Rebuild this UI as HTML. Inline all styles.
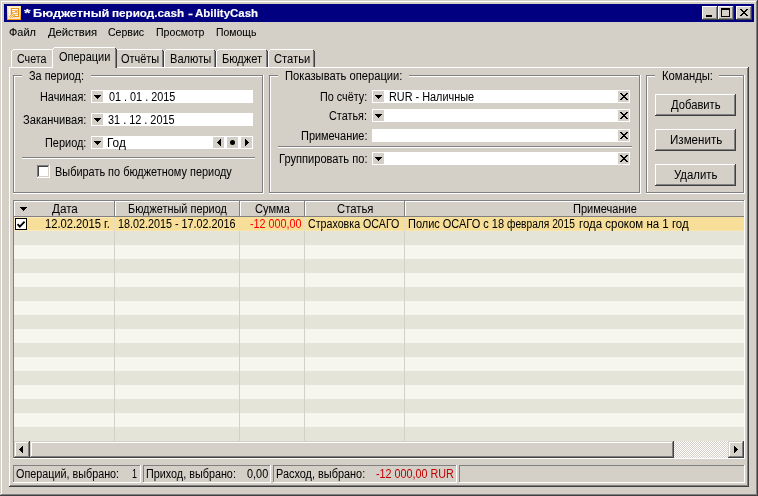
<!DOCTYPE html>
<html><head><meta charset="utf-8"><title>AbilityCash</title>
<style>
html,body{margin:0;padding:0;background:#d4d0c8;}
body{width:758px;height:496px;position:relative;overflow:hidden;font-family:"Liberation Sans",sans-serif;}
body>div,body>svg,#txt>span{position:absolute;display:block;}
#txt{left:0;top:0;width:758px;height:496px;will-change:transform;}
.t{white-space:nowrap;line-height:16px;height:16px;transform-origin:0 0;-webkit-text-stroke:0.03px currentColor;}
</style></head><body>
<div style="left:0px;top:0px;width:758px;height:496px;background:#d4d0c8;"></div>
<div style="left:1px;top:1px;width:755px;height:1px;background:#ffffff;"></div>
<div style="left:1px;top:1px;width:1px;height:493px;background:#ffffff;"></div>
<div style="left:0px;top:495px;width:758px;height:1px;background:#404040;"></div>
<div style="left:757px;top:0px;width:1px;height:496px;background:#404040;"></div>
<div style="left:1px;top:494px;width:756px;height:1px;background:#808080;"></div>
<div style="left:756px;top:1px;width:1px;height:494px;background:#808080;"></div>
<div style="left:4px;top:4px;width:750px;height:18px;background:#000080;"></div>
<svg style="left:7px;top:6px" width="14" height="14" viewBox="0 0 14 14">
<defs><linearGradient id="ig" x1="0" y1="0" x2="0" y2="1"><stop offset="0" stop-color="#ffefb0"/><stop offset="0.5" stop-color="#fbc96a"/><stop offset="1" stop-color="#f59a14"/></linearGradient></defs>
<rect x="0" y="0" width="14" height="14" fill="url(#ig)"/>
<rect x="1" y="1" width="12" height="12" fill="#fbe6c4"/>
<rect x="1" y="1" width="12" height="1" fill="#fdf2dc"/>
<rect x="2" y="2" width="1" height="9" fill="#ffffff" opacity="0.85"/>
<rect x="4" y="2" width="8" height="9" fill="#f0901a"/>
<rect x="5" y="3" width="6" height="7" fill="#f5b562"/>
<rect x="5" y="3" width="6" height="1" fill="#ffffff"/>
<rect x="5" y="5" width="6" height="1" fill="#fff6e8"/>
<rect x="8" y="5" width="2" height="1" fill="#f3a440"/>
<rect x="6" y="7" width="5" height="1" fill="#fff6e8"/>
<rect x="8" y="9" width="3" height="1" fill="#ffffff"/>
<rect x="3" y="8" width="4" height="4" fill="#fbe6c4"/>
<rect x="5" y="7" width="1" height="1" fill="#f0a030"/><rect x="4" y="8" width="1" height="1" fill="#f0a030"/><rect x="6" y="8" width="1" height="1" fill="#f0a030"/>
<rect x="3" y="9" width="1" height="1" fill="#f0a030"/><rect x="5" y="9" width="1" height="1" fill="#f0a030"/><rect x="7" y="9" width="1" height="1" fill="#f3b050"/>
<rect x="2" y="10" width="1" height="1" fill="#f3b050"/><rect x="4" y="10" width="1" height="1" fill="#f0a030"/><rect x="6" y="10" width="1" height="1" fill="#f0a030"/>
<rect x="3" y="11" width="1" height="1" fill="#f3b050"/><rect x="5" y="11" width="1" height="1" fill="#f3b050"/>
</svg>
<div style="left:702px;top:6px;width:16px;height:14px;background:#d4d0c8;"></div>
<div style="left:702px;top:6px;width:15px;height:1px;background:#ffffff;"></div>
<div style="left:702px;top:6px;width:1px;height:13px;background:#ffffff;"></div>
<div style="left:702px;top:19px;width:16px;height:1px;background:#404040;"></div>
<div style="left:717px;top:6px;width:1px;height:14px;background:#404040;"></div>
<div style="left:703px;top:18px;width:14px;height:1px;background:#808080;"></div>
<div style="left:716px;top:7px;width:1px;height:12px;background:#808080;"></div>
<div style="left:706px;top:15px;width:6px;height:2px;background:#000;"></div>
<div style="left:718px;top:6px;width:16px;height:14px;background:#d4d0c8;"></div>
<div style="left:718px;top:6px;width:15px;height:1px;background:#ffffff;"></div>
<div style="left:718px;top:6px;width:1px;height:13px;background:#ffffff;"></div>
<div style="left:718px;top:19px;width:16px;height:1px;background:#404040;"></div>
<div style="left:733px;top:6px;width:1px;height:14px;background:#404040;"></div>
<div style="left:719px;top:18px;width:14px;height:1px;background:#808080;"></div>
<div style="left:732px;top:7px;width:1px;height:12px;background:#808080;"></div>
<div style="left:721px;top:8px;width:9px;height:9px;background:#000;"></div>
<div style="left:722px;top:10px;width:7px;height:6px;background:#d4d0c8;"></div>
<div style="left:736px;top:6px;width:16px;height:14px;background:#d4d0c8;"></div>
<div style="left:736px;top:6px;width:15px;height:1px;background:#ffffff;"></div>
<div style="left:736px;top:6px;width:1px;height:13px;background:#ffffff;"></div>
<div style="left:736px;top:19px;width:16px;height:1px;background:#404040;"></div>
<div style="left:751px;top:6px;width:1px;height:14px;background:#404040;"></div>
<div style="left:737px;top:18px;width:14px;height:1px;background:#808080;"></div>
<div style="left:750px;top:7px;width:1px;height:12px;background:#808080;"></div>
<svg style="left:740px;top:9px" width="8" height="7" viewBox="0 0 8 7" shape-rendering="crispEdges"><rect x="0" y="0" width="2" height="1" fill="#000"/><rect x="6" y="0" width="2" height="1" fill="#000"/><rect x="1" y="1" width="2" height="1" fill="#000"/><rect x="5" y="1" width="2" height="1" fill="#000"/><rect x="2" y="2" width="2" height="1" fill="#000"/><rect x="4" y="2" width="2" height="1" fill="#000"/><rect x="3" y="3" width="2" height="1" fill="#000"/><rect x="3" y="3" width="2" height="1" fill="#000"/><rect x="4" y="4" width="2" height="1" fill="#000"/><rect x="2" y="4" width="2" height="1" fill="#000"/><rect x="5" y="5" width="2" height="1" fill="#000"/><rect x="1" y="5" width="2" height="1" fill="#000"/><rect x="6" y="6" width="2" height="1" fill="#000"/><rect x="0" y="6" width="2" height="1" fill="#000"/></svg>
<div style="left:9px;top:67px;width:739px;height:1px;background:#ffffff;"></div>
<div style="left:9px;top:67px;width:1px;height:419px;background:#ffffff;"></div>
<div style="left:9px;top:486px;width:740px;height:1px;background:#404040;"></div>
<div style="left:748px;top:67px;width:1px;height:420px;background:#404040;"></div>
<div style="left:10px;top:485px;width:738px;height:1px;background:#808080;"></div>
<div style="left:747px;top:68px;width:1px;height:418px;background:#808080;"></div>
<div style="left:11px;top:49px;width:43px;height:18px;background:#d4d0c8;"></div>
<div style="left:11px;top:51px;width:1px;height:16px;background:#ffffff;"></div>
<div style="left:12px;top:50px;width:1px;height:1px;background:#ffffff;"></div>
<div style="left:13px;top:49px;width:39px;height:1px;background:#ffffff;"></div>
<div style="left:52px;top:51px;width:1px;height:16px;background:#808080;"></div>
<div style="left:53px;top:51px;width:1px;height:16px;background:#404040;"></div>
<div style="left:52px;top:50px;width:1px;height:1px;background:#404040;"></div>
<div style="left:115px;top:49px;width:49px;height:18px;background:#d4d0c8;"></div>
<div style="left:117px;top:49px;width:45px;height:1px;background:#ffffff;"></div>
<div style="left:162px;top:51px;width:1px;height:16px;background:#808080;"></div>
<div style="left:163px;top:51px;width:1px;height:16px;background:#404040;"></div>
<div style="left:162px;top:50px;width:1px;height:1px;background:#404040;"></div>
<div style="left:164px;top:49px;width:52px;height:18px;background:#d4d0c8;"></div>
<div style="left:164px;top:51px;width:1px;height:16px;background:#ffffff;"></div>
<div style="left:165px;top:50px;width:1px;height:1px;background:#ffffff;"></div>
<div style="left:166px;top:49px;width:48px;height:1px;background:#ffffff;"></div>
<div style="left:214px;top:51px;width:1px;height:16px;background:#808080;"></div>
<div style="left:215px;top:51px;width:1px;height:16px;background:#404040;"></div>
<div style="left:214px;top:50px;width:1px;height:1px;background:#404040;"></div>
<div style="left:216px;top:49px;width:52px;height:18px;background:#d4d0c8;"></div>
<div style="left:216px;top:51px;width:1px;height:16px;background:#ffffff;"></div>
<div style="left:217px;top:50px;width:1px;height:1px;background:#ffffff;"></div>
<div style="left:218px;top:49px;width:48px;height:1px;background:#ffffff;"></div>
<div style="left:266px;top:51px;width:1px;height:16px;background:#808080;"></div>
<div style="left:267px;top:51px;width:1px;height:16px;background:#404040;"></div>
<div style="left:266px;top:50px;width:1px;height:1px;background:#404040;"></div>
<div style="left:268px;top:49px;width:47px;height:18px;background:#d4d0c8;"></div>
<div style="left:268px;top:51px;width:1px;height:16px;background:#ffffff;"></div>
<div style="left:269px;top:50px;width:1px;height:1px;background:#ffffff;"></div>
<div style="left:270px;top:49px;width:43px;height:1px;background:#ffffff;"></div>
<div style="left:313px;top:51px;width:1px;height:16px;background:#808080;"></div>
<div style="left:314px;top:51px;width:1px;height:16px;background:#404040;"></div>
<div style="left:313px;top:50px;width:1px;height:1px;background:#404040;"></div>
<div style="left:52px;top:47px;width:65px;height:21px;background:#d4d0c8;"></div>
<div style="left:52px;top:49px;width:1px;height:19px;background:#ffffff;"></div>
<div style="left:53px;top:48px;width:1px;height:1px;background:#ffffff;"></div>
<div style="left:54px;top:47px;width:61px;height:1px;background:#ffffff;"></div>
<div style="left:115px;top:49px;width:1px;height:19px;background:#808080;"></div>
<div style="left:116px;top:49px;width:1px;height:19px;background:#404040;"></div>
<div style="left:115px;top:48px;width:1px;height:1px;background:#404040;"></div>
<div style="left:53px;top:67px;width:62px;height:1px;background:#d4d0c8;"></div>
<div style="left:13px;top:75px;width:250px;height:1px;background:#808080;"></div>
<div style="left:13px;top:75px;width:1px;height:118px;background:#808080;"></div>
<div style="left:13px;top:192px;width:250px;height:1px;background:#808080;"></div>
<div style="left:262px;top:75px;width:1px;height:118px;background:#808080;"></div>
<div style="left:14px;top:76px;width:248px;height:1px;background:#ffffff;"></div>
<div style="left:14px;top:76px;width:1px;height:116px;background:#ffffff;"></div>
<div style="left:13px;top:193px;width:251px;height:1px;background:#ffffff;"></div>
<div style="left:263px;top:75px;width:1px;height:119px;background:#ffffff;"></div>
<div style="left:22px;top:70px;width:69px;height:12px;background:#d4d0c8;"></div>
<div style="left:269px;top:75px;width:371px;height:1px;background:#808080;"></div>
<div style="left:269px;top:75px;width:1px;height:118px;background:#808080;"></div>
<div style="left:269px;top:192px;width:371px;height:1px;background:#808080;"></div>
<div style="left:639px;top:75px;width:1px;height:118px;background:#808080;"></div>
<div style="left:270px;top:76px;width:369px;height:1px;background:#ffffff;"></div>
<div style="left:270px;top:76px;width:1px;height:116px;background:#ffffff;"></div>
<div style="left:269px;top:193px;width:372px;height:1px;background:#ffffff;"></div>
<div style="left:640px;top:75px;width:1px;height:119px;background:#ffffff;"></div>
<div style="left:278px;top:70px;width:131px;height:12px;background:#d4d0c8;"></div>
<div style="left:646px;top:75px;width:98px;height:1px;background:#808080;"></div>
<div style="left:646px;top:75px;width:1px;height:118px;background:#808080;"></div>
<div style="left:646px;top:192px;width:98px;height:1px;background:#808080;"></div>
<div style="left:743px;top:75px;width:1px;height:118px;background:#808080;"></div>
<div style="left:647px;top:76px;width:96px;height:1px;background:#ffffff;"></div>
<div style="left:647px;top:76px;width:1px;height:116px;background:#ffffff;"></div>
<div style="left:646px;top:193px;width:99px;height:1px;background:#ffffff;"></div>
<div style="left:744px;top:75px;width:1px;height:119px;background:#ffffff;"></div>
<div style="left:655px;top:70px;width:64px;height:12px;background:#d4d0c8;"></div>
<div style="left:91px;top:90px;width:162px;height:13px;background:#fff;"></div>
<div style="left:92px;top:91px;width:11px;height:11px;background:#d4d0c8;"></div>
<svg style="left:94px;top:95px" width="7" height="4" viewBox="0 0 7 4" shape-rendering="crispEdges"><rect x="0" y="0" width="7" height="1" fill="#000"/><rect x="1" y="1" width="5" height="1" fill="#000"/><rect x="2" y="2" width="3" height="1" fill="#000"/><rect x="3" y="3" width="1" height="1" fill="#000"/></svg>
<div style="left:91px;top:113px;width:162px;height:13px;background:#fff;"></div>
<div style="left:92px;top:114px;width:11px;height:11px;background:#d4d0c8;"></div>
<svg style="left:94px;top:118px" width="7" height="4" viewBox="0 0 7 4" shape-rendering="crispEdges"><rect x="0" y="0" width="7" height="1" fill="#000"/><rect x="1" y="1" width="5" height="1" fill="#000"/><rect x="2" y="2" width="3" height="1" fill="#000"/><rect x="3" y="3" width="1" height="1" fill="#000"/></svg>
<div style="left:91px;top:136px;width:162px;height:13px;background:#fff;"></div>
<div style="left:92px;top:137px;width:11px;height:11px;background:#d4d0c8;"></div>
<svg style="left:94px;top:141px" width="7" height="4" viewBox="0 0 7 4" shape-rendering="crispEdges"><rect x="0" y="0" width="7" height="1" fill="#000"/><rect x="1" y="1" width="5" height="1" fill="#000"/><rect x="2" y="2" width="3" height="1" fill="#000"/><rect x="3" y="3" width="1" height="1" fill="#000"/></svg>
<div style="left:213px;top:137px;width:11px;height:11px;background:#d4d0c8;"></div>
<svg style="left:217px;top:139px" width="4" height="7" viewBox="0 0 4 7" shape-rendering="crispEdges"><rect x="3" y="0" width="1" height="7" fill="#000"/><rect x="2" y="1" width="1" height="5" fill="#000"/><rect x="1" y="2" width="1" height="3" fill="#000"/><rect x="0" y="3" width="1" height="1" fill="#000"/></svg>
<div style="left:227px;top:137px;width:11px;height:11px;background:#d4d0c8;"></div>
<svg style="left:230px;top:140px" width="5" height="5" viewBox="0 0 5 5"><circle cx="2.5" cy="2.5" r="2.5" fill="#000"/></svg>
<div style="left:241px;top:137px;width:11px;height:11px;background:#d4d0c8;"></div>
<svg style="left:245px;top:139px" width="4" height="7" viewBox="0 0 4 7" shape-rendering="crispEdges"><rect x="0" y="0" width="1" height="7" fill="#000"/><rect x="1" y="1" width="1" height="5" fill="#000"/><rect x="2" y="2" width="1" height="3" fill="#000"/><rect x="3" y="3" width="1" height="1" fill="#000"/></svg>
<div style="left:22px;top:157px;width:233px;height:1px;background:#808080;"></div>
<div style="left:22px;top:158px;width:233px;height:1px;background:#ffffff;"></div>
<div style="left:37px;top:165px;width:13px;height:13px;background:#fff;"></div>
<div style="left:37px;top:165px;width:12px;height:1px;background:#808080;"></div>
<div style="left:37px;top:165px;width:1px;height:12px;background:#808080;"></div>
<div style="left:38px;top:166px;width:10px;height:1px;background:#404040;"></div>
<div style="left:38px;top:166px;width:1px;height:10px;background:#404040;"></div>
<div style="left:37px;top:177px;width:13px;height:1px;background:#ffffff;"></div>
<div style="left:49px;top:165px;width:1px;height:13px;background:#ffffff;"></div>
<div style="left:38px;top:176px;width:11px;height:1px;background:#d4d0c8;"></div>
<div style="left:48px;top:166px;width:1px;height:11px;background:#d4d0c8;"></div>
<div style="left:372px;top:90px;width:258px;height:13px;background:#fff;"></div>
<div style="left:373px;top:91px;width:11px;height:11px;background:#d4d0c8;"></div>
<svg style="left:375px;top:95px" width="7" height="4" viewBox="0 0 7 4" shape-rendering="crispEdges"><rect x="0" y="0" width="7" height="1" fill="#000"/><rect x="1" y="1" width="5" height="1" fill="#000"/><rect x="2" y="2" width="3" height="1" fill="#000"/><rect x="3" y="3" width="1" height="1" fill="#000"/></svg>
<div style="left:618px;top:91px;width:11px;height:11px;background:#d4d0c8;"></div>
<svg style="left:620px;top:93px" width="8" height="7" viewBox="0 0 8 7" shape-rendering="crispEdges"><rect x="0" y="0" width="2" height="1" fill="#000"/><rect x="6" y="0" width="2" height="1" fill="#000"/><rect x="1" y="1" width="2" height="1" fill="#000"/><rect x="5" y="1" width="2" height="1" fill="#000"/><rect x="2" y="2" width="2" height="1" fill="#000"/><rect x="4" y="2" width="2" height="1" fill="#000"/><rect x="3" y="3" width="2" height="1" fill="#000"/><rect x="3" y="3" width="2" height="1" fill="#000"/><rect x="4" y="4" width="2" height="1" fill="#000"/><rect x="2" y="4" width="2" height="1" fill="#000"/><rect x="5" y="5" width="2" height="1" fill="#000"/><rect x="1" y="5" width="2" height="1" fill="#000"/><rect x="6" y="6" width="2" height="1" fill="#000"/><rect x="0" y="6" width="2" height="1" fill="#000"/></svg>
<div style="left:372px;top:109px;width:258px;height:13px;background:#fff;"></div>
<div style="left:373px;top:110px;width:11px;height:11px;background:#d4d0c8;"></div>
<svg style="left:375px;top:114px" width="7" height="4" viewBox="0 0 7 4" shape-rendering="crispEdges"><rect x="0" y="0" width="7" height="1" fill="#000"/><rect x="1" y="1" width="5" height="1" fill="#000"/><rect x="2" y="2" width="3" height="1" fill="#000"/><rect x="3" y="3" width="1" height="1" fill="#000"/></svg>
<div style="left:618px;top:110px;width:11px;height:11px;background:#d4d0c8;"></div>
<svg style="left:620px;top:112px" width="8" height="7" viewBox="0 0 8 7" shape-rendering="crispEdges"><rect x="0" y="0" width="2" height="1" fill="#000"/><rect x="6" y="0" width="2" height="1" fill="#000"/><rect x="1" y="1" width="2" height="1" fill="#000"/><rect x="5" y="1" width="2" height="1" fill="#000"/><rect x="2" y="2" width="2" height="1" fill="#000"/><rect x="4" y="2" width="2" height="1" fill="#000"/><rect x="3" y="3" width="2" height="1" fill="#000"/><rect x="3" y="3" width="2" height="1" fill="#000"/><rect x="4" y="4" width="2" height="1" fill="#000"/><rect x="2" y="4" width="2" height="1" fill="#000"/><rect x="5" y="5" width="2" height="1" fill="#000"/><rect x="1" y="5" width="2" height="1" fill="#000"/><rect x="6" y="6" width="2" height="1" fill="#000"/><rect x="0" y="6" width="2" height="1" fill="#000"/></svg>
<div style="left:372px;top:129px;width:258px;height:13px;background:#fff;"></div>
<div style="left:618px;top:130px;width:11px;height:11px;background:#d4d0c8;"></div>
<svg style="left:620px;top:132px" width="8" height="7" viewBox="0 0 8 7" shape-rendering="crispEdges"><rect x="0" y="0" width="2" height="1" fill="#000"/><rect x="6" y="0" width="2" height="1" fill="#000"/><rect x="1" y="1" width="2" height="1" fill="#000"/><rect x="5" y="1" width="2" height="1" fill="#000"/><rect x="2" y="2" width="2" height="1" fill="#000"/><rect x="4" y="2" width="2" height="1" fill="#000"/><rect x="3" y="3" width="2" height="1" fill="#000"/><rect x="3" y="3" width="2" height="1" fill="#000"/><rect x="4" y="4" width="2" height="1" fill="#000"/><rect x="2" y="4" width="2" height="1" fill="#000"/><rect x="5" y="5" width="2" height="1" fill="#000"/><rect x="1" y="5" width="2" height="1" fill="#000"/><rect x="6" y="6" width="2" height="1" fill="#000"/><rect x="0" y="6" width="2" height="1" fill="#000"/></svg>
<div style="left:372px;top:152px;width:258px;height:13px;background:#fff;"></div>
<div style="left:373px;top:153px;width:11px;height:11px;background:#d4d0c8;"></div>
<svg style="left:375px;top:157px" width="7" height="4" viewBox="0 0 7 4" shape-rendering="crispEdges"><rect x="0" y="0" width="7" height="1" fill="#000"/><rect x="1" y="1" width="5" height="1" fill="#000"/><rect x="2" y="2" width="3" height="1" fill="#000"/><rect x="3" y="3" width="1" height="1" fill="#000"/></svg>
<div style="left:618px;top:153px;width:11px;height:11px;background:#d4d0c8;"></div>
<svg style="left:620px;top:155px" width="8" height="7" viewBox="0 0 8 7" shape-rendering="crispEdges"><rect x="0" y="0" width="2" height="1" fill="#000"/><rect x="6" y="0" width="2" height="1" fill="#000"/><rect x="1" y="1" width="2" height="1" fill="#000"/><rect x="5" y="1" width="2" height="1" fill="#000"/><rect x="2" y="2" width="2" height="1" fill="#000"/><rect x="4" y="2" width="2" height="1" fill="#000"/><rect x="3" y="3" width="2" height="1" fill="#000"/><rect x="3" y="3" width="2" height="1" fill="#000"/><rect x="4" y="4" width="2" height="1" fill="#000"/><rect x="2" y="4" width="2" height="1" fill="#000"/><rect x="5" y="5" width="2" height="1" fill="#000"/><rect x="1" y="5" width="2" height="1" fill="#000"/><rect x="6" y="6" width="2" height="1" fill="#000"/><rect x="0" y="6" width="2" height="1" fill="#000"/></svg>
<div style="left:278px;top:146px;width:354px;height:1px;background:#808080;"></div>
<div style="left:278px;top:147px;width:354px;height:1px;background:#ffffff;"></div>
<div style="left:655px;top:94px;width:81px;height:22px;background:#d4d0c8;"></div>
<div style="left:655px;top:94px;width:80px;height:1px;background:#ffffff;"></div>
<div style="left:655px;top:94px;width:1px;height:21px;background:#ffffff;"></div>
<div style="left:655px;top:115px;width:81px;height:1px;background:#404040;"></div>
<div style="left:735px;top:94px;width:1px;height:22px;background:#404040;"></div>
<div style="left:656px;top:114px;width:79px;height:1px;background:#808080;"></div>
<div style="left:734px;top:95px;width:1px;height:20px;background:#808080;"></div>
<div style="left:655px;top:129px;width:81px;height:22px;background:#d4d0c8;"></div>
<div style="left:655px;top:129px;width:80px;height:1px;background:#ffffff;"></div>
<div style="left:655px;top:129px;width:1px;height:21px;background:#ffffff;"></div>
<div style="left:655px;top:150px;width:81px;height:1px;background:#404040;"></div>
<div style="left:735px;top:129px;width:1px;height:22px;background:#404040;"></div>
<div style="left:656px;top:149px;width:79px;height:1px;background:#808080;"></div>
<div style="left:734px;top:130px;width:1px;height:20px;background:#808080;"></div>
<div style="left:655px;top:164px;width:81px;height:22px;background:#d4d0c8;"></div>
<div style="left:655px;top:164px;width:80px;height:1px;background:#ffffff;"></div>
<div style="left:655px;top:164px;width:1px;height:21px;background:#ffffff;"></div>
<div style="left:655px;top:185px;width:81px;height:1px;background:#404040;"></div>
<div style="left:735px;top:164px;width:1px;height:22px;background:#404040;"></div>
<div style="left:656px;top:184px;width:79px;height:1px;background:#808080;"></div>
<div style="left:734px;top:165px;width:1px;height:20px;background:#808080;"></div>
<div style="left:13px;top:200px;width:732px;height:1px;background:#808080;"></div>
<div style="left:13px;top:200px;width:1px;height:259px;background:#808080;"></div>
<div style="left:13px;top:458px;width:732px;height:1px;background:#ffffff;"></div>
<div style="left:744px;top:200px;width:1px;height:259px;background:#ffffff;"></div>
<div style="left:14px;top:201px;width:101px;height:16px;background:#d4d0c8;"></div>
<div style="left:14px;top:201px;width:100px;height:1px;background:#ffffff;"></div>
<div style="left:14px;top:201px;width:1px;height:15px;background:#ffffff;"></div>
<div style="left:14px;top:216px;width:101px;height:1px;background:#808080;"></div>
<div style="left:114px;top:201px;width:1px;height:16px;background:#808080;"></div>
<div style="left:115px;top:201px;width:125px;height:16px;background:#d4d0c8;"></div>
<div style="left:115px;top:201px;width:124px;height:1px;background:#ffffff;"></div>
<div style="left:115px;top:201px;width:1px;height:15px;background:#ffffff;"></div>
<div style="left:115px;top:216px;width:125px;height:1px;background:#808080;"></div>
<div style="left:239px;top:201px;width:1px;height:16px;background:#808080;"></div>
<div style="left:240px;top:201px;width:65px;height:16px;background:#d4d0c8;"></div>
<div style="left:240px;top:201px;width:64px;height:1px;background:#ffffff;"></div>
<div style="left:240px;top:201px;width:1px;height:15px;background:#ffffff;"></div>
<div style="left:240px;top:216px;width:65px;height:1px;background:#808080;"></div>
<div style="left:304px;top:201px;width:1px;height:16px;background:#808080;"></div>
<div style="left:305px;top:201px;width:100px;height:16px;background:#d4d0c8;"></div>
<div style="left:305px;top:201px;width:99px;height:1px;background:#ffffff;"></div>
<div style="left:305px;top:201px;width:1px;height:15px;background:#ffffff;"></div>
<div style="left:305px;top:216px;width:100px;height:1px;background:#808080;"></div>
<div style="left:404px;top:201px;width:1px;height:16px;background:#808080;"></div>
<div style="left:405px;top:201px;width:339px;height:16px;background:#d4d0c8;"></div>
<div style="left:405px;top:201px;width:338px;height:1px;background:#ffffff;"></div>
<div style="left:405px;top:201px;width:1px;height:15px;background:#ffffff;"></div>
<div style="left:405px;top:216px;width:339px;height:1px;background:#808080;"></div>
<svg style="left:20px;top:207px" width="7" height="4" viewBox="0 0 7 4" shape-rendering="crispEdges"><rect x="0" y="0" width="7" height="1" fill="#000"/><rect x="1" y="1" width="5" height="1" fill="#000"/><rect x="2" y="2" width="3" height="1" fill="#000"/><rect x="3" y="3" width="1" height="1" fill="#000"/></svg>
<div style="left:14px;top:217px;width:730px;height:14px;background:#f7de99;"></div>
<div style="left:14px;top:230px;width:730px;height:1px;background:#f9e4ac;"></div>
<div style="left:14px;top:217px;width:100px;height:1px;background:#fbeabf;"></div>
<div style="left:14px;top:230px;width:100px;height:1px;background:#fbeabf;"></div>
<div style="left:14px;top:217px;width:1px;height:14px;background:#fbeabf;"></div>
<div style="left:14px;top:231px;width:730px;height:14px;background:#e4e4d8;"></div>
<div style="left:14px;top:245px;width:730px;height:14px;background:#f6f6ee;"></div>
<div style="left:14px;top:259px;width:730px;height:14px;background:#e4e4d8;"></div>
<div style="left:14px;top:273px;width:730px;height:14px;background:#f6f6ee;"></div>
<div style="left:14px;top:287px;width:730px;height:14px;background:#e4e4d8;"></div>
<div style="left:14px;top:301px;width:730px;height:14px;background:#f6f6ee;"></div>
<div style="left:14px;top:315px;width:730px;height:14px;background:#e4e4d8;"></div>
<div style="left:14px;top:329px;width:730px;height:14px;background:#f6f6ee;"></div>
<div style="left:14px;top:343px;width:730px;height:14px;background:#e4e4d8;"></div>
<div style="left:14px;top:357px;width:730px;height:14px;background:#f6f6ee;"></div>
<div style="left:14px;top:371px;width:730px;height:14px;background:#e4e4d8;"></div>
<div style="left:14px;top:385px;width:730px;height:14px;background:#f6f6ee;"></div>
<div style="left:14px;top:399px;width:730px;height:14px;background:#e4e4d8;"></div>
<div style="left:14px;top:413px;width:730px;height:14px;background:#f6f6ee;"></div>
<div style="left:14px;top:427px;width:730px;height:14px;background:#e4e4d8;"></div>
<div style="left:114px;top:217px;width:1px;height:224px;background:#d4d0c8;"></div>
<div style="left:239px;top:217px;width:1px;height:224px;background:#d4d0c8;"></div>
<div style="left:304px;top:217px;width:1px;height:224px;background:#d4d0c8;"></div>
<div style="left:404px;top:217px;width:1px;height:224px;background:#d4d0c8;"></div>
<div style="left:114px;top:217px;width:1px;height:14px;background:#e6dcc0;"></div>
<div style="left:239px;top:217px;width:1px;height:14px;background:#e6dcc0;"></div>
<div style="left:304px;top:217px;width:1px;height:14px;background:#e6dcc0;"></div>
<div style="left:404px;top:217px;width:1px;height:14px;background:#e6dcc0;"></div>
<div style="left:15px;top:218px;width:12px;height:12px;background:#000;"></div>
<div style="left:16px;top:219px;width:10px;height:10px;background:#fff;"></div>
<svg style="left:15px;top:218px" width="12" height="12" viewBox="0 0 12 12"><path d="M2.6 6.2 L4.8 8.6 L9.6 3.6" fill="none" stroke="#000" stroke-width="1.9"/></svg>
<div style="left:14px;top:441px;width:730px;height:17px;background:#d4d0c8;"></div>
<div style="left:674px;top:441px;width:54px;height:17px;background-color:#fff;background-image:conic-gradient(#fff 25%,#d4d0c8 0 50%,#fff 0 75%,#d4d0c8 0);background-size:2px 2px"></div>
<div style="left:14px;top:441px;width:16px;height:17px;background:#d4d0c8;"></div>
<div style="left:15px;top:442px;width:13px;height:1px;background:#ffffff;"></div>
<div style="left:15px;top:442px;width:1px;height:14px;background:#ffffff;"></div>
<div style="left:14px;top:457px;width:16px;height:1px;background:#404040;"></div>
<div style="left:29px;top:441px;width:1px;height:17px;background:#404040;"></div>
<div style="left:15px;top:456px;width:14px;height:1px;background:#808080;"></div>
<div style="left:28px;top:442px;width:1px;height:15px;background:#808080;"></div>
<svg style="left:19px;top:446px" width="4" height="7" viewBox="0 0 4 7" shape-rendering="crispEdges"><rect x="3" y="0" width="1" height="7" fill="#000"/><rect x="2" y="1" width="1" height="5" fill="#000"/><rect x="1" y="2" width="1" height="3" fill="#000"/><rect x="0" y="3" width="1" height="1" fill="#000"/></svg>
<div style="left:728px;top:441px;width:16px;height:17px;background:#d4d0c8;"></div>
<div style="left:729px;top:442px;width:13px;height:1px;background:#ffffff;"></div>
<div style="left:729px;top:442px;width:1px;height:14px;background:#ffffff;"></div>
<div style="left:728px;top:457px;width:16px;height:1px;background:#404040;"></div>
<div style="left:743px;top:441px;width:1px;height:17px;background:#404040;"></div>
<div style="left:729px;top:456px;width:14px;height:1px;background:#808080;"></div>
<div style="left:742px;top:442px;width:1px;height:15px;background:#808080;"></div>
<svg style="left:734px;top:446px" width="4" height="7" viewBox="0 0 4 7" shape-rendering="crispEdges"><rect x="0" y="0" width="1" height="7" fill="#000"/><rect x="1" y="1" width="1" height="5" fill="#000"/><rect x="2" y="2" width="1" height="3" fill="#000"/><rect x="3" y="3" width="1" height="1" fill="#000"/></svg>
<div style="left:30px;top:441px;width:644px;height:17px;background:#d4d0c8;"></div>
<div style="left:31px;top:442px;width:641px;height:1px;background:#ffffff;"></div>
<div style="left:31px;top:442px;width:1px;height:14px;background:#ffffff;"></div>
<div style="left:30px;top:457px;width:644px;height:1px;background:#404040;"></div>
<div style="left:673px;top:441px;width:1px;height:17px;background:#404040;"></div>
<div style="left:31px;top:456px;width:642px;height:1px;background:#808080;"></div>
<div style="left:672px;top:442px;width:1px;height:15px;background:#808080;"></div>
<div style="left:13px;top:465px;width:128px;height:1px;background:#808080;"></div>
<div style="left:13px;top:465px;width:1px;height:18px;background:#808080;"></div>
<div style="left:13px;top:482px;width:128px;height:1px;background:#ffffff;"></div>
<div style="left:140px;top:465px;width:1px;height:18px;background:#ffffff;"></div>
<div style="left:143px;top:465px;width:128px;height:1px;background:#808080;"></div>
<div style="left:143px;top:465px;width:1px;height:18px;background:#808080;"></div>
<div style="left:143px;top:482px;width:128px;height:1px;background:#ffffff;"></div>
<div style="left:270px;top:465px;width:1px;height:18px;background:#ffffff;"></div>
<div style="left:273px;top:465px;width:184px;height:1px;background:#808080;"></div>
<div style="left:273px;top:465px;width:1px;height:18px;background:#808080;"></div>
<div style="left:273px;top:482px;width:184px;height:1px;background:#ffffff;"></div>
<div style="left:456px;top:465px;width:1px;height:18px;background:#ffffff;"></div>
<div style="left:459px;top:465px;width:286px;height:1px;background:#808080;"></div>
<div style="left:459px;top:465px;width:1px;height:18px;background:#808080;"></div>
<div style="left:459px;top:482px;width:286px;height:1px;background:#ffffff;"></div>
<div style="left:744px;top:465px;width:1px;height:18px;background:#ffffff;"></div>
<div id="txt">
<span id="ti1" class="t" style="left:24.0px;top:5px;font-size:11.5px;color:#fff;transform:scaleX(1.4647);font-weight:bold;-webkit-text-stroke:0.15px currentColor;">*</span>
<span id="ti2" class="t" style="left:33.0px;top:5px;font-size:11.5px;color:#fff;transform:scaleX(1.1089);font-weight:bold;-webkit-text-stroke:0.15px currentColor;">Бюджетный</span>
<span id="ti3" class="t" style="left:112.0px;top:5px;font-size:11.5px;color:#fff;transform:scaleX(1.0155);font-weight:bold;-webkit-text-stroke:0.15px currentColor;">период.cash</span>
<span id="ti4" class="t" style="left:188.0px;top:5px;font-size:11.5px;color:#fff;transform:scaleX(1.3137);font-weight:bold;-webkit-text-stroke:0.15px currentColor;">-</span>
<span id="ti5" class="t" style="left:195.0px;top:5px;font-size:11.5px;color:#fff;transform:scaleX(0.9962);font-weight:bold;-webkit-text-stroke:0.15px currentColor;">AbilityCash</span>
<span id="m1" class="t" style="left:9.0px;top:24px;font-size:11.5px;color:#000;transform:scaleX(0.9508);-webkit-text-stroke:0.08px currentColor;">Файл</span>
<span id="m2" class="t" style="left:48.0px;top:24px;font-size:11.5px;color:#000;transform:scaleX(0.9754);-webkit-text-stroke:0.08px currentColor;">Действия</span>
<span id="m3" class="t" style="left:108.0px;top:24px;font-size:11.5px;color:#000;transform:scaleX(0.9176);-webkit-text-stroke:0.08px currentColor;">Сервис</span>
<span id="m4" class="t" style="left:156.0px;top:24px;font-size:11.5px;color:#000;transform:scaleX(0.9217);-webkit-text-stroke:0.08px currentColor;">Просмотр</span>
<span id="m5" class="t" style="left:216.0px;top:24px;font-size:11.5px;color:#000;transform:scaleX(0.9083);-webkit-text-stroke:0.08px currentColor;">Помощь</span>
<span id="tb1" class="t" style="left:17.0px;top:51px;font-size:12.5px;color:#000;transform:scaleX(0.8565);">Счета</span>
<span id="tb2" class="t" style="left:59.0px;top:49px;font-size:12.5px;color:#000;transform:scaleX(0.8782);">Операции</span>
<span id="tb3" class="t" style="left:121.0px;top:51px;font-size:12.5px;color:#000;transform:scaleX(0.8767);">Отчёты</span>
<span id="tb4" class="t" style="left:170.0px;top:51px;font-size:12.5px;color:#000;transform:scaleX(0.8877);">Валюты</span>
<span id="tb5" class="t" style="left:222.0px;top:51px;font-size:12.5px;color:#000;transform:scaleX(0.8865);">Бюджет</span>
<span id="tb6" class="t" style="left:274.0px;top:51px;font-size:12.5px;color:#000;transform:scaleX(0.8948);">Статьи</span>
<span id="g1" class="t" style="left:29.0px;top:68px;font-size:12.5px;color:#000;transform:scaleX(0.8712);">За период:</span>
<span id="g2" class="t" style="left:285.0px;top:68px;font-size:12.5px;color:#000;transform:scaleX(0.8948);">Показывать операции:</span>
<span id="g3" class="t" style="left:662.0px;top:68px;font-size:12.5px;color:#000;transform:scaleX(0.9037);">Команды:</span>
<span id="l1" class="t" style="left:40.0px;top:89px;font-size:12.5px;color:#000;transform:scaleX(0.8687);">Начиная:</span>
<span id="l2" class="t" style="left:23.0px;top:112px;font-size:12.5px;color:#000;transform:scaleX(0.8882);">Заканчивая:</span>
<span id="l3" class="t" style="left:45.0px;top:135px;font-size:12.5px;color:#000;transform:scaleX(0.8749);">Период:</span>
<span id="v1" class="t" style="left:109.0px;top:89px;font-size:12.5px;color:#000;transform:scaleX(0.8673);">01 . 01 . 2015</span>
<span id="v2" class="t" style="left:108.0px;top:112px;font-size:12.5px;color:#000;transform:scaleX(0.8708);">31 . 12 . 2015</span>
<span id="v3" class="t" style="left:107.0px;top:135px;font-size:12.5px;color:#000;transform:scaleX(0.945);">Год</span>
<span id="cb" class="t" style="left:55.0px;top:164px;font-size:12.5px;color:#000;transform:scaleX(0.8737);">Выбирать по бюджетному периоду</span>
<span id="l4" class="t" style="left:320.0px;top:89px;font-size:12.5px;color:#000;transform:scaleX(0.8644);">По счёту:</span>
<span id="l5" class="t" style="left:329.0px;top:108px;font-size:12.5px;color:#000;transform:scaleX(0.8655);">Статья:</span>
<span id="l6" class="t" style="left:301.0px;top:128px;font-size:12.5px;color:#000;transform:scaleX(0.8766);">Примечание:</span>
<span id="l7" class="t" style="left:279.0px;top:151px;font-size:12.5px;color:#000;transform:scaleX(0.8881);">Группировать по:</span>
<span id="v4" class="t" style="left:389.0px;top:89px;font-size:12.5px;color:#000;transform:scaleX(0.8691);">RUR - Наличные</span>
<span id="b1" class="t" style="left:671.0px;top:97px;font-size:12.5px;color:#000;transform:scaleX(0.8977);">Добавить</span>
<span id="b2" class="t" style="left:670.0px;top:132px;font-size:12.5px;color:#000;transform:scaleX(0.9271);">Изменить</span>
<span id="b3" class="t" style="left:674.0px;top:167px;font-size:12.5px;color:#000;transform:scaleX(0.9087);">Удалить</span>
<span id="h1" class="t" style="left:52.0px;top:201px;font-size:12.5px;color:#000;transform:scaleX(0.9341);clip-path:inset(0 0 1.5px 0);">Дата</span>
<span id="h2" class="t" style="left:128.0px;top:201px;font-size:12.5px;color:#000;transform:scaleX(0.8733);clip-path:inset(0 0 1.5px 0);">Бюджетный период</span>
<span id="h3" class="t" style="left:255.0px;top:201px;font-size:12.5px;color:#000;transform:scaleX(0.8891);clip-path:inset(0 0 1.5px 0);">Сумма</span>
<span id="h4" class="t" style="left:337.0px;top:201px;font-size:12.5px;color:#000;transform:scaleX(0.9035);clip-path:inset(0 0 1.5px 0);">Статья</span>
<span id="h5" class="t" style="left:573.0px;top:201px;font-size:12.5px;color:#000;transform:scaleX(0.8816);clip-path:inset(0 0 1.5px 0);">Примечание</span>
<span id="r1" class="t" style="left:45.0px;top:216px;font-size:12.5px;color:#000;transform:scaleX(0.8953);">12.02.2015 г.</span>
<span id="r2" class="t" style="left:118.0px;top:216px;font-size:12.5px;color:#000;transform:scaleX(0.8628);">18.02.2015 - 17.02.2016</span>
<span id="r3" class="t" style="left:250.0px;top:216px;font-size:12.5px;color:#ff0000;transform:scaleX(0.8628);">-12 000,00</span>
<span id="r4" class="t" style="left:308.0px;top:216px;font-size:12.5px;color:#000;transform:scaleX(0.8529);">Страховка ОСАГО</span>
<span id="r5a" class="t" style="left:408.0px;top:216px;font-size:12.5px;color:#000;transform:scaleX(0.8781);">Полис ОСАГО с 18</span>
<span id="r5b" class="t" style="left:507.0px;top:216px;font-size:12.5px;color:#000;transform:scaleX(0.8167);">февраля 2015</span>
<span id="r5c" class="t" style="left:579.0px;top:216px;font-size:12.5px;color:#000;transform:scaleX(0.9182);">года сроком на 1 год</span>
<span id="s1" class="t" style="left:16.0px;top:466px;font-size:12.5px;color:#000;transform:scaleX(0.8634);">Операций, выбрано:</span>
<span id="s2" class="t" style="left:132.0px;top:466px;font-size:12.5px;color:#000;transform:scaleX(0.7156);">1</span>
<span id="s3" class="t" style="left:146.0px;top:466px;font-size:12.5px;color:#000;transform:scaleX(0.8646);">Приход, выбрано:</span>
<span id="s4" class="t" style="left:247.0px;top:466px;font-size:12.5px;color:#000;transform:scaleX(0.8705);">0,00</span>
<span id="s5" class="t" style="left:276.0px;top:466px;font-size:12.5px;color:#000;transform:scaleX(0.8733);">Расход, выбрано:</span>
<span id="s6" class="t" style="left:376.0px;top:466px;font-size:12.5px;color:#c00000;transform:scaleX(0.8624);">-12 000,00 RUR</span>
</div>
</body></html>
